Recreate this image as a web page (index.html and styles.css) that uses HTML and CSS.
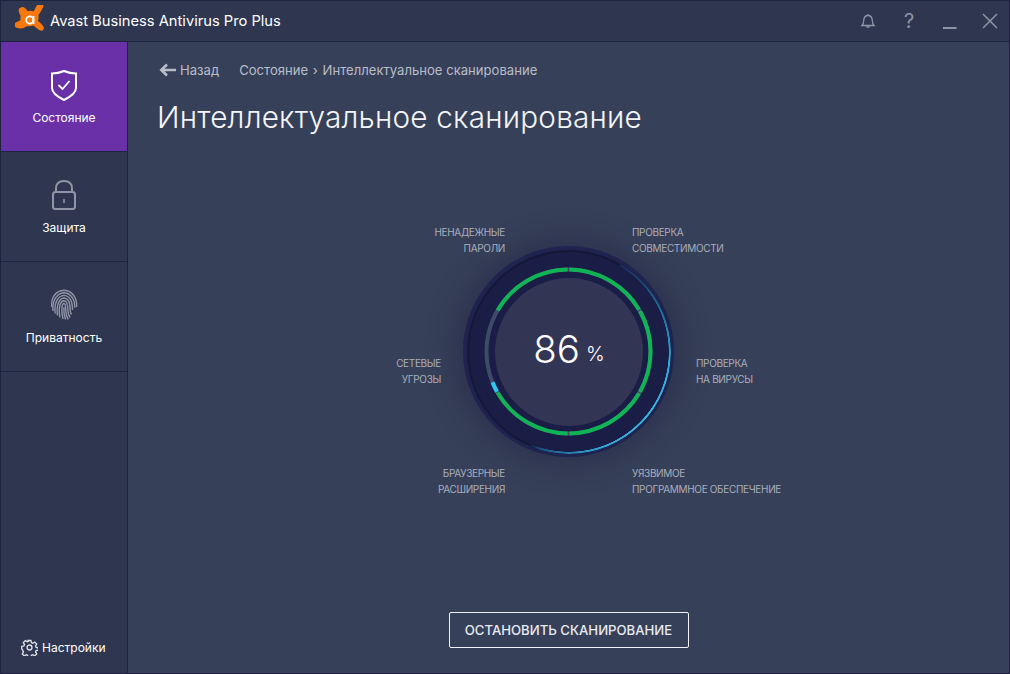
FILE: index.html
```html
<!DOCTYPE html>
<html lang="ru">
<head>
<meta charset="utf-8">
<title>Avast Business Antivirus Pro Plus</title>
<link rel="stylesheet" href="styles.css">
</head>
<body>
<div class="window">
  <header class="titlebar">
    <svg class="logo" width="32" height="32" viewBox="5 5 32 32">
      <path class="logo-blob" d="M11.500 8C13.500 7.500 15.500 9 17 12C19.500 11.200 22 11.500 24 12.500C25.500 9.500 27 6 29 4C31 2.500 33 3.500 32.500 6C32 8.500 29.500 12 27.500 15C28 17 28 19 27 21C29 23 32 25 33 27.500C33.500 29.500 32 30.500 30 29.500C28 28.500 25.500 26 23.500 24.500C21.500 25.500 19 25.800 17 25.200C15 26.500 12 28.500 9 27.500C6 27 4 25.500 5 24C6.500 22.500 9.500 22 11.500 20.500C11 19 11 17.500 11.500 16C10.500 14 9 11.500 9.500 9.500C10 8.500 10.700 8.200 11.500 8Z"/>
      <circle cx="19.800" cy="20" r="3.600" fill="none" stroke="#fff" stroke-width="1.800"/>
      <path d="M23.500 16v8" stroke="#fff" stroke-width="1.800"/>
    </svg>
    <span class="app-name">Avast Business Antivirus Pro Plus</span>
    <div class="win-controls">
      <svg class="ctl-bell" width="16" height="18" viewBox="0 0 16 18" fill="none" stroke="#8e95a6" stroke-width="1.300"><path d="M2 13.500c1.300-1.200 1.600-2.600 1.700-4.800C3.800 5.500 5.300 3.500 8 3.500s4.200 2 4.300 5.200c.1 2.200.4 3.600 1.700 4.800z"/><path d="M6.800 14c0 1.800 2.400 1.800 2.400 0"/><path d="M8 2v1.500"/></svg>
      <span class="help">?</span>
      <svg class="minimize" width="14" height="4" viewBox="0 0 14 4"><path d="M0 2h13.500" stroke="#8e95a6" stroke-width="2"/></svg>
      <svg class="ctl-close" width="16" height="16" viewBox="0 0 16 16"><path d="M1 1l14 14M15 1L1 15" stroke="#8e95a6" stroke-width="1.500"/></svg>
    </div>
  </header>
  <div class="body">
    <nav class="sidebar">
      <a class="nav-item active">
        <svg width="28" height="32" viewBox="0 0 28 32" fill="none" stroke="#fff" stroke-width="2"><path d="M2 4.500C7 4.500 10.500 3.500 14 2c3.500 1.500 7 2.500 12 2.500V19c0 5-5 8.500-12 12C7 27.500 2 24 2 19z"/><path d="M8.500 16l4 4 7-8" stroke-width="1.800"/></svg>
        <span>Состояние</span>
      </a>
      <a class="nav-item">
        <svg width="26" height="32" viewBox="0 0 26 32" fill="none" stroke="#8f95a5" stroke-width="2"><path d="M5 13V9.500C5 4.500 8 2 13 2s8 2.500 8 7.500V13"/><rect x="2" y="13" width="22" height="17" rx="2.500"/><path d="M13 20v4" stroke-width="1.600"/></svg>
        <span>Защита</span>
      </a>
      <a class="nav-item">
        <svg width="28" height="32" viewBox="0 0 28 32" fill="none" stroke="#8f95a5" stroke-width="1.400">
          <path d="M1.800 18C.5 8.500 6 1.800 14 1.300 22 1.800 27.200 8.500 26.700 18"/>
          <path d="M3 22C1.800 11 7.500 4.200 14 3.800c6.500.4 11 6 10.800 15"/>
          <path d="M5.200 24.500C3.800 14 8 6.800 14 6.400c5.500.4 8.500 5.500 8.500 14.600"/>
          <path d="M7.500 26.500C6 16 9.500 9.200 14 9c4 .2 6.200 4.500 6.200 12 0 2 .5 3.500 1.300 4.500"/>
          <path d="M10 28.500C8 18 10.500 11.800 14 11.700c3 .1 3.900 4.300 3.900 9.800 0 3 1 5.500 2.300 7"/>
          <path d="M13 30C10.800 21 12 14.500 14 14.500c1.600 0 1.800 3.500 1.800 7.500 0 3.500 1 6.500 2.500 8.500"/>
          <path d="M14 18c-.5 4 .2 9 1.500 12.500"/>
        </svg>
        <span>Приватность</span>
      </a>
      <a class="settings">
        <svg width="17" height="17" viewBox="0 0 24 24" fill="none" stroke="#dfe3ea" stroke-width="1.900"><circle cx="12" cy="12" r="3.500"/><path d="M10 2h4l.7 3.100 2 .9 2.700-1.700 2.800 2.800-1.700 2.700.9 2 3.100.7v3l-3.100.8-.9 2 1.700 2.700-2.800 2.800-2.700-1.700-2 .9-.7 3.100h-4l-.7-3.100-2-.9-2.700 1.700-2.800-2.800 1.700-2.700-.9-2L1 13.500v-3l3.100-.7.900-2-1.700-2.700 2.800-2.800 2.700 1.700 2-.9z"/></svg>
        <span>Настройки</span>
      </a>
    </nav>
    <main class="content">
      <div class="crumbs">
        <a class="back">
          <svg width="17" height="14" viewBox="0 0 17 14" fill="none" stroke="#b9bdc8" stroke-width="2.600"><path d="M8 1.500L2.300 7 8 12.500M2.500 7H17"/></svg>
          <span>Назад</span>
        </a>
        <span class="path">Состояние <span class="sep">›</span> Интеллектуальное сканирование</span>
      </div>
      <h1 class="title">Интеллектуальное сканирование</h1>
      <section class="scan">
        <div class="dial">
          <div class="dial-plate"></div>
          <div class="dial-line"></div>
          <div class="dial-blue"></div>
          <svg class="dial-arcs" width="211" height="211" viewBox="-105.500 -105.500 211 211" fill="none" stroke-width="4">
            <circle r="82" stroke="#3f4a68"/>
            <g stroke="#10b454">
              <path d="M-71 -41A82 82 0 0 1 -.8 -82"/>
              <path d="M.8 -82A82 82 0 0 1 70.600 -41.800"/>
              <path d="M71.400 -40.400A82 82 0 0 1 71.400 40.400"/>
              <path d="M70.600 41.800A82 82 0 0 1 .8 82"/>
              <path d="M-.8 82A82 82 0 0 1 -71 41"/>
            </g>
            <path d="M-71.500 40.200A82 82 0 0 1 -76 30.700" stroke="#2fc5f2"/>
          </svg>
          <div class="dial-core"><span class="num">86</span><span class="pct">%</span></div>
        </div>
        <div class="label right-al l-pass">НЕНАДЕЖНЫЕ<br>ПАРОЛИ</div>
        <div class="label l-compat">ПРОВЕРКА<br>СОВМЕСТИМОСТИ</div>
        <div class="label right-al l-net">СЕТЕВЫЕ<br>УГРОЗЫ</div>
        <div class="label l-virus">ПРОВЕРКА<br>НА ВИРУСЫ</div>
        <div class="label right-al l-browser">БРАУЗЕРНЫЕ<br>РАСШИРЕНИЯ</div>
        <div class="label l-soft">УЯЗВИМОЕ<br>ПРОГРАММНОЕ ОБЕСПЕЧЕНИЕ</div>
      </section>
      <div class="actions"><button class="stop">ОСТАНОВИТЬ СКАНИРОВАНИЕ</button></div>
    </main>
  </div>
</div>
</body>
</html>
```
FILE: styles.css
```css
* { box-sizing: border-box; }
html, body { margin: 0; height: 100%; overflow: hidden; }
body { font-family: "Inter", "Open Sans", "Liberation Sans", sans-serif; color: #fff; background: #1e2440; }
.window { width: 1010px; height: 674px; border: 1px solid #1d2240; display: flex; flex-direction: column; }
.titlebar { height: 41px; flex: none; display: flex; align-items: center; background: #2e3650; border-bottom: 1px solid #1d2240; padding-left: 14px; }
.logo { flex: none; margin-right: 3px; }
.logo-blob { fill: #f6780f; stroke: #f6780f; stroke-width: 1.600; stroke-linejoin: round; }
.app-name { font-size: 14.700px; color: #fff; }
.win-controls { margin-left: auto; display: flex; align-items: center; padding-right: 11px; }
.ctl-bell { margin-right: 27px; }
.help { color: #8e95a6; font-size: 20px; line-height: 20px; width: 12px; text-align: center; margin-right: 28px; }
.minimize { margin-top: 14px; margin-right: 25px; }
.body { flex: 1; display: flex; min-height: 0; }
.sidebar { width: 127px; flex: none; background: #2e3650; border-right: 1px solid #1d2240; display: flex; flex-direction: column; }
.nav-item { height: 110px; flex: none; display: flex; flex-direction: column; align-items: center; justify-content: flex-start; padding-top: 27px; gap: 8px; border-bottom: 1px solid #1f2542; font-size: 12px; }
.nav-item span { line-height: 18px; }
.nav-item.active { background: #6930a8; }
.settings { margin-top: auto; display: flex; align-items: center; gap: 4px; padding: 0 0 17px 20px; font-size: 12px; }
.content { flex: 1; background: #374059; display: flex; flex-direction: column; min-width: 0; }
.crumbs { display: flex; align-items: center; padding: 19px 0 0 31px; height: 36px; font-size: 13.100px; color: #b9bdc8; }
.back { display: flex; align-items: center; gap: 4px; margin-right: 20px; }
.sep { margin: 0 1px; }
.title { margin: 0; padding: 20px 0 0 29px; font-size: 29.700px; line-height: 38px; font-weight: 300; letter-spacing: .2px; color: #f4f5f8; }
.scan { position: relative; height: 300px; margin-top: 110px; flex: none; }
.dial { position: absolute; left: 335px; top: 0; width: 211px; height: 211px; display: grid; place-items: center; }
.dial > * { grid-area: 1 / 1; }
.dial-plate { width: 211px; height: 211px; border-radius: 50%; background: #1e2350; box-shadow: 0 0 28px 8px rgba(24, 28, 60, .4); }
.dial-line { width: 204px; height: 204px; border-radius: 50%; border: 2px solid #141937; background: #1a1d45; }
.dial-blue { width: 204px; height: 204px; border-radius: 50%;
  background: conic-gradient(from 30deg, #1b2a55 0deg, #1f6a96 35deg, #33a8d8 65deg, #3ab4e4 110deg, #2f98c8 140deg, #1c5a88 165deg, #1c2048 172deg, transparent 173deg);
  -webkit-mask: radial-gradient(closest-side, transparent calc(100% - 2.500px), #000 calc(100% - 2px));
  mask: radial-gradient(closest-side, transparent calc(100% - 2.500px), #000 calc(100% - 2px)); }
.dial-arcs { display: block; }
.dial-core { width: 148px; height: 148px; border-radius: 50%; background: #333555; display: flex; align-items: center; justify-content: center; gap: 6px; padding: 0 0 6px 1px; }
.num { font-size: 38.500px; font-weight: 300; line-height: 40px; }
.pct { font-size: 20px; font-weight: 300; line-height: 40px; padding-top: 10px; }
.label { position: absolute; font-size: 10px; line-height: 16px; letter-spacing: -.33px; color: #a9aebb; white-space: nowrap; }
.right-al { text-align: right; }
.l-pass { right: 504px; top: -22px; }
.l-compat { left: 504px; top: -22px; }
.l-net { right: 568px; top: 109px; }
.l-virus { left: 568px; top: 109px; }
.l-browser { right: 504px; top: 219px; }
.l-soft { left: 504px; top: 219px; width: 149px; overflow: hidden; }
.actions { margin-top: auto; display: flex; justify-content: center; padding: 0 0 25px 0; }
.stop { width: 240px; height: 36px; background: transparent; border: 1px solid #f2f3f6; border-radius: 2px; color: #e8eaef; font: 500 13.150px "Inter", "Open Sans", sans-serif; }
```
